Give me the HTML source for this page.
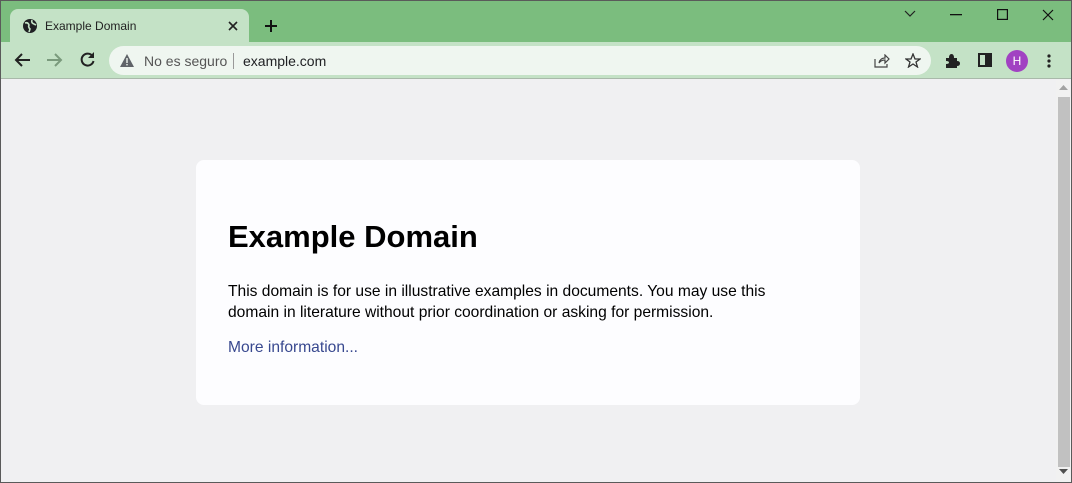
<!DOCTYPE html>
<html><head><meta charset="utf-8"><style>
*{margin:0;padding:0;box-sizing:border-box}
body{width:1072px;height:483px;overflow:hidden;font-family:"Liberation Sans",sans-serif;background:#f0f0f2;position:relative}
.frame{position:absolute;inset:0;border:1px solid #5a5a5a;pointer-events:none;z-index:10}
.tabbar{position:absolute;left:0;top:0;width:1072px;height:42px;background:#7bbd7e}
.tab{position:absolute;left:10px;top:9px;width:239px;height:33px;background:#c4e2c6;border-radius:8px 8px 0 0}
.tab .t{position:absolute;left:35px;top:10px;font-size:12px;color:#222}
.toolbar{position:absolute;left:0;top:42px;width:1072px;height:37px;background:#c4e2c6;border-bottom:1px solid #a9b9aa}
.omni{position:absolute;left:109px;top:4px;width:822px;height:29px;background:#eff6f0;border-radius:15px}
.omni .ns{position:absolute;left:35px;top:7px;font-size:14px;color:#555}
.omni .sep{position:absolute;left:124px;top:7px;width:1px;height:16px;background:#999}
.omni .url{position:absolute;left:134px;top:7px;font-size:14px;color:#202124}
svg{position:absolute}
.scroll{position:absolute;left:1056px;top:80px;width:16px;height:403px;background:#f1f1f1}
.thumb{position:absolute;left:1058px;top:97px;width:12px;height:370px;background:#c1c1c1}
.card{position:absolute;left:196px;top:160px;width:664px;height:245px;background:#fdfdff;border-radius:8px}
h1{position:absolute;left:32px;top:59px;font-size:31px;font-weight:bold;color:#000}
p{position:absolute;left:32px;top:121px;width:580px;font-size:15.6px;line-height:21px;color:#000}
a{position:absolute;left:32px;top:179px;font-size:15.6px;color:#38488f;text-decoration:none}
</style></head><body>
<div class="tabbar">
 <div class="tab">
  <svg style="left:12px;top:9px" width="16" height="16" viewBox="0 0 16 16"><circle cx="8" cy="8" r="7" fill="#202124"/><path d="M3 5 Q6 4 7 7 Q6 9 8 11 L7 14 M10 2 Q9 5 12 6 L14 7" stroke="#c4e2c6" stroke-width="1.6" fill="none"/></svg>
  <div class="t">Example Domain</div>
  <svg style="left:218px;top:12px" width="10" height="10" viewBox="0 0 10 10"><path d="M1 1L9 9M9 1L1 9" stroke="#222" stroke-width="1.6"/></svg>
 </div>
 <svg style="left:264px;top:19px" width="14" height="14" viewBox="0 0 14 14"><path d="M7 1V13M1 7H13" stroke="#111" stroke-width="2"/></svg>
 <svg style="left:904px;top:10px" width="12" height="8" viewBox="0 0 12 8"><path d="M1 1L6 6L11 1" stroke="#222" stroke-width="1.2" fill="none"/></svg>
 <svg style="left:950px;top:14px" width="12" height="2"><rect width="12" height="1.3" fill="#111"/></svg>
 <svg style="left:997px;top:9px" width="11" height="11"><rect x=".6" y=".6" width="9.8" height="9.8" stroke="#111" stroke-width="1.2" fill="none"/></svg>
 <svg style="left:1042px;top:9px" width="12" height="12" viewBox="0 0 12 12"><path d="M1 1L11 11M11 1L1 11" stroke="#111" stroke-width="1.2"/></svg>
</div>
<div class="toolbar">
 <svg style="left:14px;top:10px" width="17" height="16" viewBox="0 0 17 16"><path d="M16 8H2M8 2L2 8L8 14" stroke="#222" stroke-width="2" fill="none"/></svg>
 <svg style="left:46px;top:10px" width="17" height="16" viewBox="0 0 17 16"><path d="M1 8H15M9 2L15 8L9 14" stroke="#7a9a7c" stroke-width="2" fill="none"/></svg>
 <svg style="left:79px;top:9px" width="17" height="17" viewBox="0 0 17 17"><path d="M13.5 5A6 6 0 1 0 14.5 10" stroke="#222" stroke-width="2" fill="none"/><path d="M15 1V7H9Z" fill="#222"/></svg>
 <div class="omni">
  <svg style="left:11px;top:8px" width="14" height="13" viewBox="0 0 14 13"><path d="M7 0L14 13H0Z" fill="#5f6368"/><rect x="6.3" y="4" width="1.4" height="5" fill="#eff6f0"/><rect x="6.3" y="10" width="1.4" height="1.4" fill="#eff6f0"/></svg>
  <div class="ns">No es seguro</div><div class="sep"></div><div class="url">example.com</div>
  <svg style="left:765px;top:8px" width="16" height="14" viewBox="0 0 16 14"><path d="M1 5V13H13V10M5 9Q6 4 11 4V1L15 5L11 9V6Q7 6 5 9Z" stroke="#444" stroke-width="1.2" fill="none"/></svg>
  <svg style="left:796px;top:7px" width="16" height="15" viewBox="0 0 16 15"><path d="M8 1L10 6H15L11 9L12.5 14L8 11L3.5 14L5 9L1 6H6Z" stroke="#333" stroke-width="1.3" fill="none"/></svg>
 </div>
 <svg style="left:945px;top:11px" width="15" height="15" viewBox="0 0 15 15"><path d="M1 5H4Q4 1 6.5 1Q9 1 9 5H12V8Q15 8 15 10.5Q15 13 12 13V15H1V11Q4 11 4 9.5Q4 8 1 8Z" fill="#222"/></svg>
 <svg style="left:978px;top:11px" width="14" height="14"><rect x="1" y="1" width="12" height="12" stroke="#222" stroke-width="2" fill="none"/><rect x="7" y="1" width="6" height="12" fill="#222"/></svg>
 <div style="position:absolute;left:1006px;top:8px;width:22px;height:22px;border-radius:50%;background:#a142c2;color:#fff;font-size:12px;text-align:center;line-height:22px">H</div>
 <svg style="left:1047px;top:12px" width="4" height="14"><circle cx="2" cy="2" r="1.6" fill="#222"/><circle cx="2" cy="7" r="1.6" fill="#222"/><circle cx="2" cy="12" r="1.6" fill="#222"/></svg>
</div>
<div class="scroll"></div><div class="thumb"></div>
<svg style="left:1059px;top:85px" width="9" height="6"><path d="M4.5 0L9 5H0Z" fill="#a3a3a3"/></svg>
<svg style="left:1059px;top:469px" width="9" height="6"><path d="M0 0H9L4.5 5Z" fill="#505050"/></svg>
<div class="card">
 <h1>Example Domain</h1>
 <p>This domain is for use in illustrative examples in documents. You may use this domain in literature without prior coordination or asking for permission.</p>
 <a>More information...</a>
</div>
<div class="frame"></div>
</body></html>
